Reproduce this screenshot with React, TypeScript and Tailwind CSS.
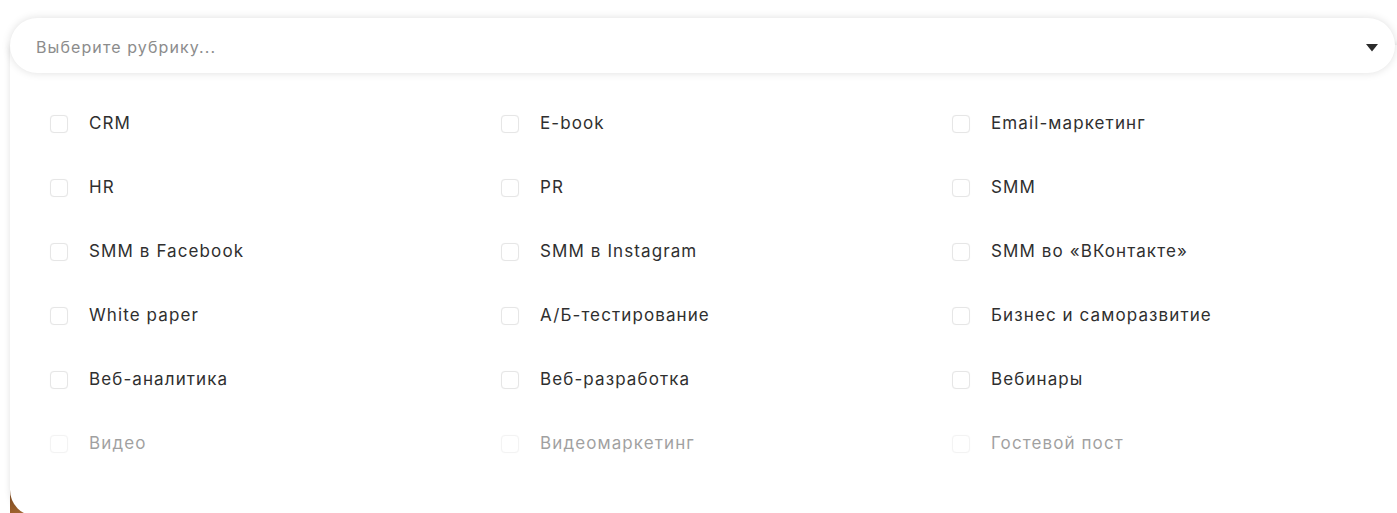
import { useState } from 'react';

const rubrics = [
  'CRM',
  'E-book',
  'Email-маркетинг',
  'HR',
  'PR',
  'SMM',
  'SMM в Facebook',
  'SMM в Instagram',
  'SMM во «ВКонтакте»',
  'White paper',
  'А/Б-тестирование',
  'Бизнес и саморазвитие',
  'Веб-аналитика',
  'Веб-разработка',
  'Вебинары',
  'Видео',
  'Видеомаркетинг',
  'Гостевой пост',
];

function CaretDown() {
  return (
    <svg width="12" height="8" viewBox="0 0 12 8" className="mt-[2px]">
      <path d="M0 0H12L6 7.5Z" fill="#2b2b2b" />
    </svg>
  );
}

export default function App() {
  const [checked, setChecked] = useState<Record<string, boolean>>({});

  return (
    <div
      className="relative w-[1397px] h-[513px] overflow-hidden bg-white"
      style={{ fontFamily: 'Inter, "Noto Sans", sans-serif' }}
    >
      {/* brown image corner peeking under the dropdown */}
      <div className="absolute left-[10px] bottom-0 w-[40px] h-[40px] bg-gradient-to-br from-[#6b3f1d] via-[#9a5f2c] to-[#c88a4a]" />

      <div className="relative pl-[10px] pt-[18px]">
        <div className="relative z-10 flex h-[55px] w-[1385px] items-center justify-between rounded-[28px] bg-white pl-[26px] pr-[17px] pt-[3px] shadow-[0_0_8px_rgba(0,0,0,0.13)]">
          <span className="text-[16px] tracking-[1.1px] text-[#8c8c8c]">Выберите рубрику...</span>
          <CaretDown />
        </div>

        <div className="relative -mt-[28px] w-[1400px] rounded-bl-[26px] bg-white pb-[40px] pl-[40px] pt-[47px] shadow-[0_0_6px_rgba(0,0,0,0.12)]">
          <div className="grid grid-cols-[451px_451px_451px]">
            {rubrics.map((name, i) => {
              const faded = i >= 15;
              return (
                <label
                  key={name}
                  className={`flex h-[64px] cursor-pointer items-center gap-[21px] ${faded ? 'opacity-45' : ''}`}
                >
                  <input
                    type="checkbox"
                    className="sr-only"
                    checked={!!checked[name]}
                    onChange={() => setChecked((c) => ({ ...c, [name]: !c[name] }))}
                  />
                  <span className="h-[18px] w-[18px] rounded-[4px] border border-[#e6e6e6] bg-white shadow-[0_0_1px_rgba(0,0,0,0.06)]" />
                  <span className="text-[17px] tracking-[1.1px] text-[#2f2f2f]">{name}</span>
                </label>
              );
            })}
          </div>
        </div>
      </div>
    </div>
  );
}
